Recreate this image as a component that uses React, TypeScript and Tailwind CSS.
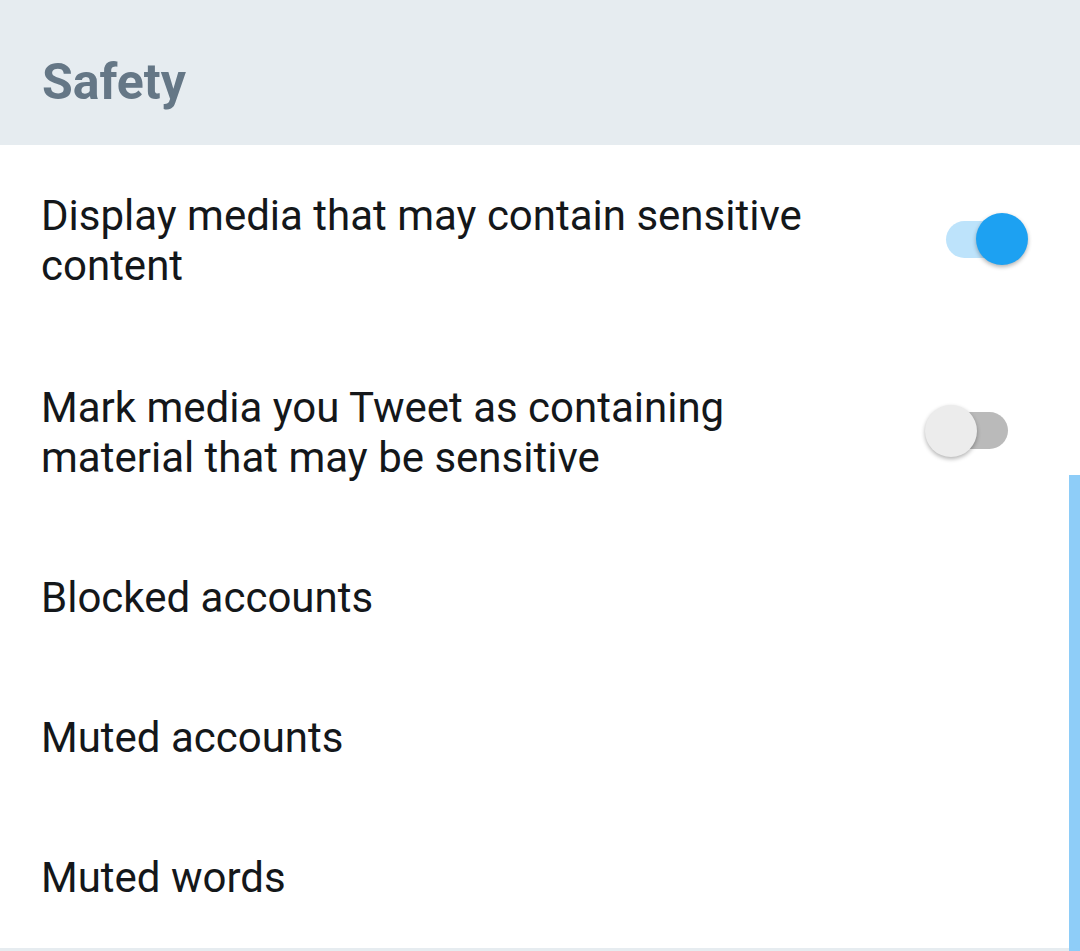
import React from "react";

function Toggle({ on }: { on: boolean }) {
  return (
    <div className="relative w-[103px] h-[52px] shrink-0">
      <div
        className={
          "absolute left-[21px] top-[7.5px] w-[62px] h-[37px] rounded-full " +
          (on ? "bg-[#bde3fb]" : "bg-[#bababa]")
        }
      />
      <div
        className={
          "absolute top-0 w-[52px] h-[52px] rounded-full shadow-[0_2px_4px_rgba(0,0,0,0.3)] " +
          (on ? "left-[51px] bg-[#1da1f2]" : "left-0 bg-[#ececec]")
        }
      />
    </div>
  );
}

function Row({ text, h, toggle }: { text: string; h: string; toggle?: "on" | "off" }) {
  return (
    <div className={"flex items-center pl-[41px] " + h}>
      <div className="w-[790px] text-[42px] leading-[50px] text-[#14171a]">{text}</div>
      {toggle && (
        <div className="ml-auto mr-[52px] -translate-y-[2px]">
          <Toggle on={toggle === "on"} />
        </div>
      )}
    </div>
  );
}

export default function App() {
  return (
    <div
      className="relative w-[1080px] h-[951px] bg-white overflow-hidden"
      style={{ fontFamily: "Roboto, 'Noto Sans', sans-serif" }}
    >
      <div className="h-[145px] bg-[#e6ecf0] pl-[42px] pt-[57px]">
        <div className="text-[50px] font-bold text-[#657786] leading-none">Safety</div>
      </div>
      <Row text="Display media that may contain sensitive content" h="h-[192px]" toggle="on" />
      <Row text="Mark media you Tweet as containing material that may be sensitive" h="h-[191px]" toggle="off" />
      <Row text="Blocked accounts" h="h-[140px]" />
      <Row text="Muted accounts" h="h-[140px]" />
      <Row text="Muted words" h="h-[140px]" />
      <div className="h-[3px] bg-[#e6ecf0]" />
      <div className="absolute right-0 top-[475px] w-[11px] h-[476px] bg-[#8ecdf8]" />
    </div>
  );
}
